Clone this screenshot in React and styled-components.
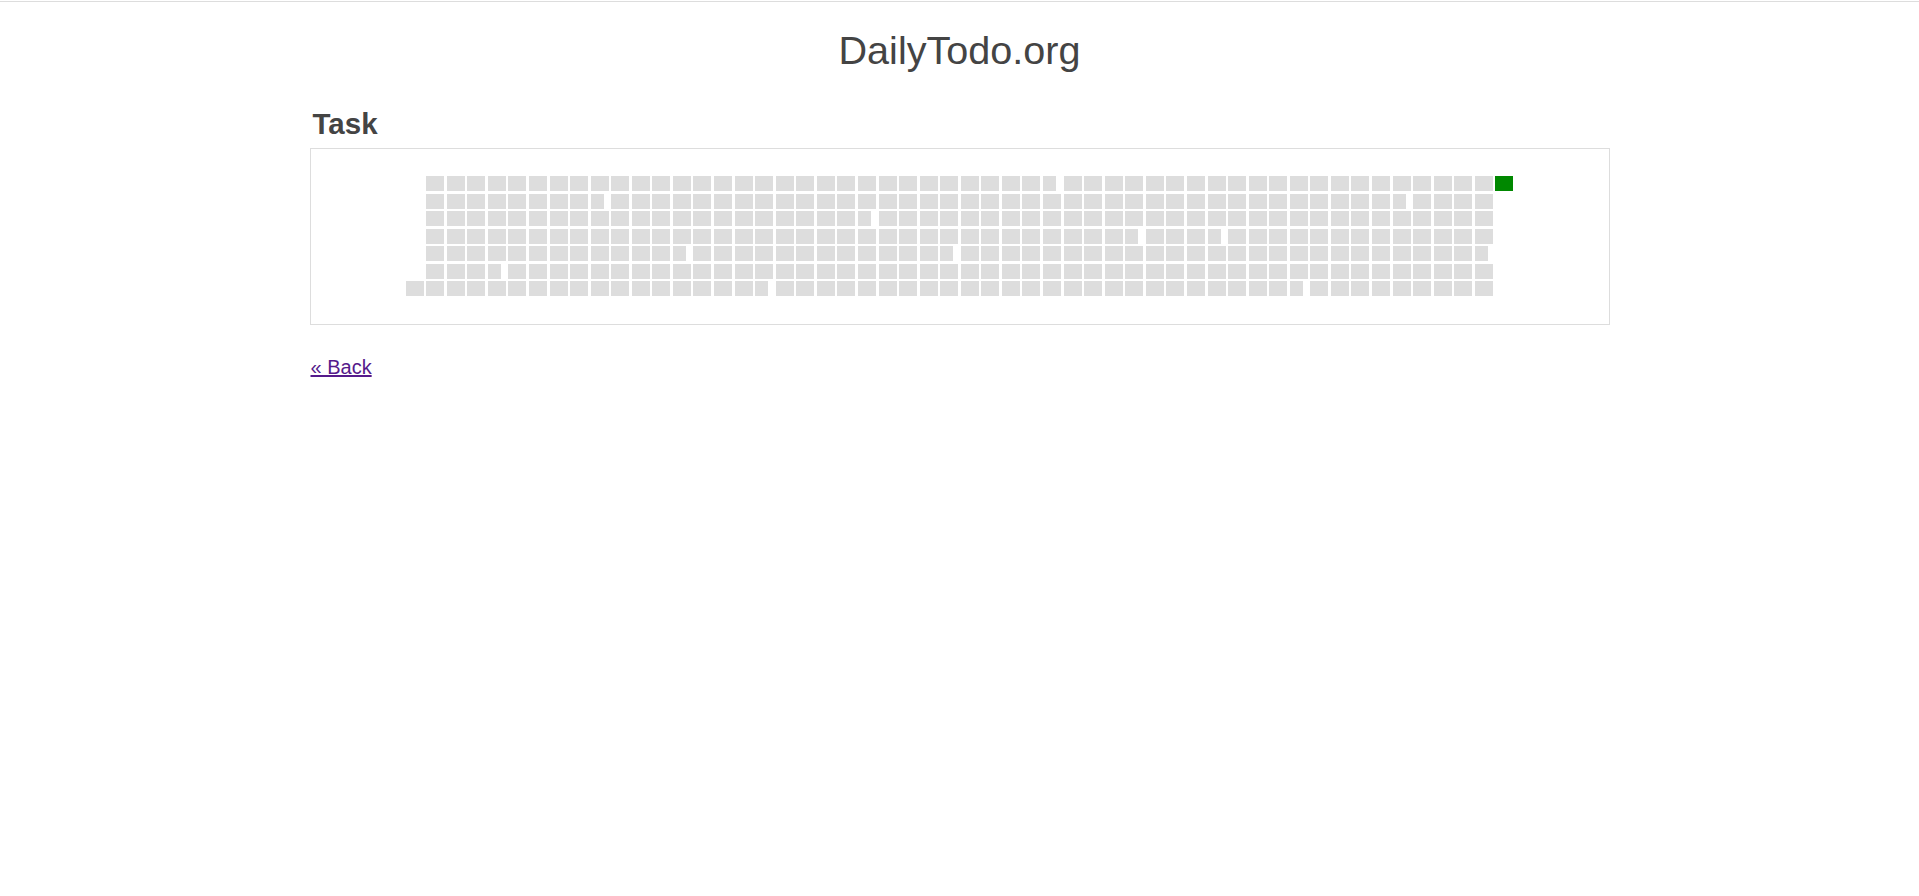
import React from "react";
import styled, { createGlobalStyle } from "styled-components";

const GlobalStyle = createGlobalStyle`
  html, body {
    margin: 0;
    padding: 0;
    background: #fff;
  }
  body {
    font-family: "Liberation Sans", Arial, Helvetica, sans-serif;
    color: #444;
  }
`;

const TopRule = styled.div`
  margin-top: 1px;
  height: 1px;
  background: #dddddd;
`;

const Page = styled.div`
  width: 1300px;
  margin: 0 auto;
  display: flex;
  flex-direction: column;
`;

const Title = styled.h1`
  margin: 26px 0 0;
  font-size: 39.6px;
  line-height: 45px;
  font-weight: normal;
  text-align: center;
  color: #444;
`;

const TaskName = styled.h2`
  margin: 34px 0 0;
  padding-left: 3px;
  font-size: 29.5px;
  line-height: 34px;
  font-weight: bold;
  color: #444;
`;

const Panel = styled.div`
  margin-top: 7px;
  border: 1px solid #dddddd;
  padding: 27px 0 28px;
  display: flex;
  justify-content: center;
`;

const Calendar = styled.div`
  display: flex;
  gap: 2.566px;
`;

const Week = styled.div`
  display: flex;
  flex-direction: column;
  justify-content: ${(p) => (p.$bottom ? "flex-end" : "flex-start")};
  gap: 2.5px;
  width: 18px;
  height: 120px;
`;

const Day = styled.div`
  width: ${(p) => (p.$monthEnd ? "13px" : "18px")};
  height: 15px;
  background: ${(p) => (p.$done ? "#008800" : "#dddddd")};
`;

const BackLink = styled.a`
  margin-top: 31px;
  margin-left: 1px;
  align-self: flex-start;
  font-size: 20px;
  line-height: 23px;
  color: #551a8b;
  text-decoration: underline;
`;

function buildWeeks() {
  const start = new Date(2022, 5, 3);
  const total = 366;
  const weeks = [];
  for (let i = 0; i < total; i++) {
    const d = new Date(start.getFullYear(), start.getMonth(), start.getDate() + i);
    const next = new Date(d.getFullYear(), d.getMonth(), d.getDate() + 1);
    const w = Math.floor((i + 6) / 7);
    if (!weeks[w]) weeks[w] = [];
    weeks[w].push({
      key: i,
      monthEnd: next.getMonth() !== d.getMonth() && i !== total - 1,
      done: i === total - 1,
    });
  }
  return weeks;
}

const weeks = buildWeeks();

export default function App() {
  return (
    <>
      <GlobalStyle />
      <TopRule />
      <Page>
        <Title>DailyTodo.org</Title>
        <TaskName>Task</TaskName>
        <Panel>
          <Calendar>
            {weeks.map((days, wi) => (
              <Week key={wi} $bottom={wi === 0}>
                {days.map((d) => (
                  <Day key={d.key} $monthEnd={d.monthEnd} $done={d.done} />
                ))}
              </Week>
            ))}
          </Calendar>
        </Panel>
        <BackLink href="#">« Back</BackLink>
      </Page>
    </>
  );
}
